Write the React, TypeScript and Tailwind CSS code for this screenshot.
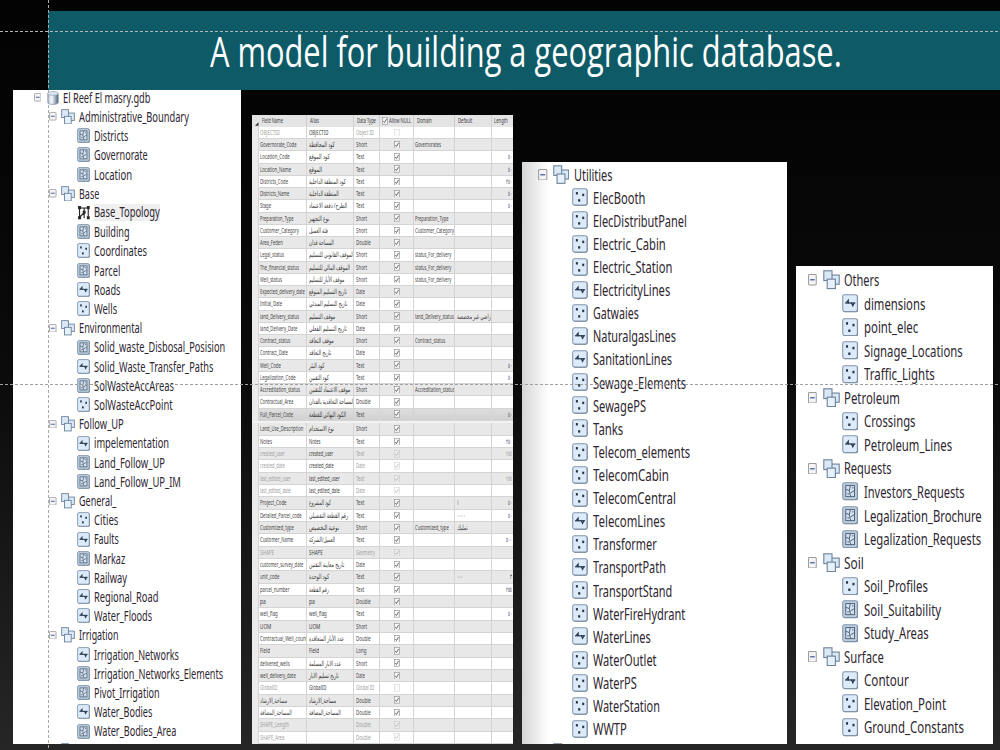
import { useLayoutEffect, useRef, useState } from 'react'
import clsx from 'clsx'

type Kind = 'db' | 'set' | 'poly' | 'line' | 'point' | 'topo'
type Node = [kind: Kind, label: string, width: number]
type Size = 'sm' | 'md' | 'lg'

// Condenses a label horizontally so that it takes exactly `width` pixels
function FitText({ text, width, className }: { text: string; width: number; className?: string }) {
  const ref = useRef<HTMLSpanElement>(null)
  const [scale, setScale] = useState(1)

  useLayoutEffect(() => {
    if (ref.current && ref.current.offsetWidth > 0) setScale(width / ref.current.offsetWidth)
  }, [text, width])

  return (
    <span className={clsx('block shrink-0 whitespace-nowrap', className)} style={{ width }}>
      <span ref={ref} dir="auto" className="inline-block origin-left" style={{ transform: `scaleX(${scale})` }}>
        {text}
      </span>
    </span>
  )
}

const mainTree: Node[] = [
  ['db', 'El Reef El masry.gdb', 87.5],
  ['set', 'Administrative_Boundary', 110],
  ['poly', 'Districts', 34.5],
  ['poly', 'Governorate', 54],
  ['poly', 'Location', 38],
  ['set', 'Base', 20],
  ['topo', 'Base_Topology', 65.5],
  ['poly', 'Building', 36],
  ['point', 'Coordinates', 53],
  ['poly', 'Parcel', 26.5],
  ['line', 'Roads', 26.5],
  ['point', 'Wells', 23],
  ['set', 'Environmental', 63.5],
  ['poly', 'Solid_waste_Disbosal_Posision', 131.5],
  ['line', 'Solid_Waste_Transfer_Paths', 119],
  ['poly', 'SolWasteAccAreas', 80],
  ['point', 'SolWasteAccPoint', 79],
  ['set', 'Follow_UP', 45],
  ['line', 'impelementation', 75],
  ['poly', 'Land_Follow_UP', 71],
  ['poly', 'Land_Follow_UP_IM', 87],
  ['set', 'General_', 37.5],
  ['point', 'Cities', 24],
  ['line', 'Faults', 25],
  ['poly', 'Markaz', 31.5],
  ['line', 'Railway', 33],
  ['line', 'Regional_Road', 64.5],
  ['line', 'Water_Floods', 58.5],
  ['set', 'Irrigation', 39.5],
  ['line', 'Irrigation_Networks', 85],
  ['poly', 'Irrigation_Networks_Elements', 129],
  ['poly', 'Pivot_Irrigation', 66],
  ['line', 'Water_Bodies', 58.5],
  ['poly', 'Water_Bodies_Area', 82.5],
  ['set', '', 0],
]

const utilitiesTree: Node[] = [
  ['set', 'Utilities', 38.7],
  ['point', 'ElecBooth', 52.5],
  ['point', 'ElecDistributPanel', 94],
  ['point', 'Electric_Cabin', 73],
  ['point', 'Electric_Station', 79],
  ['line', 'ElectricityLines', 77.5],
  ['point', 'Gatwaies', 46],
  ['line', 'NaturalgasLines', 83],
  ['line', 'SanitationLines', 79.5],
  ['point', 'Sewage_Elements', 93],
  ['point', 'SewagePS', 53],
  ['point', 'Tanks', 30],
  ['point', 'Telecom_elements', 97.5],
  ['point', 'TelecomCabin', 76],
  ['point', 'TelecomCentral', 83],
  ['line', 'TelecomLines', 72],
  ['point', 'Transformer', 63.5],
  ['line', 'TransportPath', 73],
  ['point', 'TransportStand', 79],
  ['point', 'WaterFireHydrant', 92],
  ['line', 'WaterLines', 57.5],
  ['point', 'WaterOutlet', 63.5],
  ['point', 'WaterPS', 43.5],
  ['point', 'WaterStation', 67],
  ['point', 'WWTP', 34],
  ['set', '', 0],
]

const othersTree: Node[] = [
  ['set', 'Others', 35.5],
  ['line', 'dimensions', 61.5],
  ['point', 'point_elec', 54],
  ['point', 'Signage_Locations', 99],
  ['point', 'Traffic_Lights', 71],
  ['set', 'Petroleum', 55.5],
  ['point', 'Crossings', 51.5],
  ['line', 'Petroleum_Lines', 88],
  ['set', 'Requests', 47.5],
  ['poly', 'Investors_Requests', 100.5],
  ['poly', 'Legalization_Brochure', 118],
  ['poly', 'Legalization_Requests', 117],
  ['set', 'Soil', 19.5],
  ['point', 'Soil_Profiles', 64],
  ['poly', 'Soil_Suitability', 77],
  ['poly', 'Study_Areas', 65],
  ['set', 'Surface', 40],
  ['line', 'Contour', 45],
  ['point', 'Elevation_Point', 82],
  ['point', 'Ground_Constants', 100],
]

const sizes = {
  sm: {
    row: 'h-[19.21px] text-[13.5px]',
    db: 'pl-[21px]',
    set: 'pl-[36.8px]',
    leaf: 'pl-[64.8px]',
    expander: 'h-[8.5px] w-[7.5px]',
    dbIcon: 'ml-[6px] h-[14px] w-[12px]',
    setIcon: 'ml-[4.3px] h-[15.5px] w-[14px]',
    icon: 'h-[15.3px] w-[13.3px]',
    setText: 'ml-[4px]',
    leafText: 'ml-[3.6px]',
  },
  md: {
    row: 'h-[23.12px] text-[15.5px]',
    db: '',
    set: 'pl-[16px]',
    leaf: 'pl-[49.7px]',
    expander: 'h-[11.5px] w-[9.4px]',
    dbIcon: '',
    setIcon: 'ml-[5.3px] h-[19px] w-[16.4px]',
    icon: 'h-[18.3px] w-[16.3px]',
    setText: 'ml-[4.8px]',
    leafText: 'ml-[4.8px]',
  },
  lg: {
    row: 'h-[23.55px] text-[15.8px]',
    db: '',
    set: 'pl-[11.5px]',
    leaf: 'pl-[45.8px]',
    expander: 'h-[11.5px] w-[8.8px]',
    dbIcon: '',
    setIcon: 'ml-[6.2px] h-[19.3px] w-[17px]',
    icon: 'h-[18.8px] w-[16.7px]',
    setText: 'ml-[4.5px]',
    leafText: 'ml-[4.8px]',
  },
}

function Expander({ className }: { className: string }) {
  return (
    <svg viewBox="0 0 10 12" preserveAspectRatio="none" className={clsx('shrink-0', className)}>
      <rect x="0.6" y="0.6" width="8.8" height="10.8" rx="1" fill="#f4f4f4" stroke="#9a9a9a" strokeWidth="1.1" />
      <path d="M2.4 6H7.6" stroke="#4d64a8" strokeWidth="1.4" />
    </svg>
  )
}

function NodeIcon({ kind, className }: { kind: Kind; className: string }) {
  const cls = clsx('shrink-0', className)

  if (kind === 'db') {
    return (
      <svg viewBox="0 0 12 14" preserveAspectRatio="none" className={cls}>
        <defs>
          <linearGradient id="cyl">
            <stop offset="0" stopColor="#b9c9dc" />
            <stop offset="0.4" stopColor="#f3f8fc" />
            <stop offset="1" stopColor="#4d6480" />
          </linearGradient>
        </defs>
        <path d="M0.8 2.3V11.6C0.8 14 11.2 14 11.2 11.6V2.3Z" fill="url(#cyl)" stroke="#61758d" strokeWidth="0.6" />
        <ellipse cx="6" cy="2.4" rx="5.2" ry="1.9" fill="#dfe9f3" stroke="#8195ab" strokeWidth="0.6" />
      </svg>
    )
  }

  if (kind === 'set') {
    return (
      <svg viewBox="0 0 17 19" preserveAspectRatio="none" className={cls}>
        <g fill="#dbe9f7" stroke="#6c829b" strokeWidth="1.1">
          <rect x="8" y="5" width="8.2" height="9" />
          <rect x="0.8" y="0.8" width="8.2" height="9.6" />
          <rect x="4.2" y="9" width="8.2" height="9.3" fill="#e6f1fb" />
        </g>
      </svg>
    )
  }

  if (kind === 'topo') {
    return (
      <svg viewBox="0 0 13 15" preserveAspectRatio="none" className={cls}>
        <g fill="none" stroke="#2b2424" strokeWidth="1.1">
          <path d="M2.5 2V13M2.5 3H11M11 2V13M2.5 12L7 7.5V3M7 7V13" />
        </g>
        <g fill="#2b2424">
          <rect x="1" y="1" width="3" height="3" />
          <rect x="1" y="11" width="3" height="3" />
          <rect x="9.6" y="1" width="2.8" height="3" />
          <rect x="9.6" y="11" width="2.8" height="3" />
          <rect x="5.6" y="5.6" width="2.8" height="3" />
        </g>
      </svg>
    )
  }

  return (
    <svg viewBox="0 0 16 18" preserveAspectRatio="none" className={cls}>
      <rect x="1" y="1" width="14.4" height="16.4" rx="1.8" fill="#5f7489" />
      <rect x="0.7" y="0.7" width="14" height="16" rx="1.8" fill={kind === 'poly' ? '#bccddf' : '#dceafa'} stroke="#8195aa" strokeWidth="1" />
      {kind === 'point' && (
        <g fill="#27384d">
          <rect x="3.8" y="4" width="2" height="2.4" />
          <rect x="10" y="5.6" width="2" height="2.4" />
          <rect x="6" y="11" width="2.1" height="2.4" />
        </g>
      )}
      {kind === 'line' && (
        <g fill="none" stroke="#27384d">
          <path d="M3 8.6H12.8" strokeWidth="1.2" />
          <path d="M4.2 8.2L6 6V9M9 8.4L10.4 11.2L11.6 8.6" strokeWidth="1.2" />
        </g>
      )}
      {kind === 'poly' && (
        <g fill="none" stroke="#4c5f76" strokeWidth="0.9">
          <rect x="3.6" y="3.4" width="8.4" height="10.6" fill="#d5e1ee" />
          <path d="M3.6 7L7 8.2L8 3.6M7 8.2L8.2 14M8.2 10.4L12 8.2M5 11.4H7M9.6 5.6H11" />
        </g>
      )}
    </svg>
  )
}

function Tree({ nodes, size }: { nodes: Node[]; size: Size }) {
  const s = sizes[size]
  return (
    <ul className="font-['Noto_Sans',sans-serif] text-[#2e2630]">
      {nodes.map(([kind, label, width], i) => {
        const isBranch = kind === 'db' || kind === 'set'
        return (
          <li
            key={i}
            className={clsx('flex items-center leading-none', s.row, kind === 'db' ? s.db : kind === 'set' ? s.set : s.leaf)}
          >
            {isBranch && <Expander className={clsx(s.expander, !label && 'invisible')} />}
            <NodeIcon kind={kind} className={kind === 'db' ? s.dbIcon : kind === 'set' ? s.setIcon : s.icon} />
            {label && (
              <FitText
                text={label}
                width={width}
                className={clsx('pt-[2px]', isBranch ? s.setText : s.leafText, kind === 'topo' && 'bg-[#efefef] pb-[2px]')}
              />
            )}
          </li>
        )
      })}
    </ul>
  )
}

interface Field {
  name: string
  nw: number
  alias?: string
  aw?: number
  type: string
  domain?: string
  dw?: number
  def?: string
  defW?: number
  len?: string
  muted?: boolean
  unchecked?: boolean
}

const upperFields: Field[] = [
  { name: 'OBJECTID', nw: 19.5, alias: 'OBJECTID', aw: 19, type: 'Object ID', muted: true, unchecked: true },
  { name: 'Governorate_Code', nw: 36.5, alias: 'كود المحافظة', aw: 26, type: 'Short', domain: 'Governorates', dw: 26 },
  { name: 'Location_Code', nw: 29.5, alias: 'كود الموقع', aw: 21, type: 'Text', len: '٥٠' },
  { name: 'Location_Name', nw: 31, alias: 'الموقع', aw: 13, type: 'Text', len: '٥٠' },
  { name: 'Districts_Code', nw: 28, alias: 'كود المنطقة الداخلية', aw: 37, type: 'Text', len: '٢٥٠' },
  { name: 'Districts_Name', nw: 29.5, alias: 'المنطقة الداخلية', aw: 30, type: 'Text', len: '٥٠' },
  { name: 'Stage', nw: 11, alias: 'الطرح/ دفعة الاعتماد', aw: 38, type: 'Text', len: '٥٠' },
  { name: 'Preparation_Type', nw: 33.5, alias: 'نوع التجهيز', aw: 20, type: 'Short', domain: 'Preparation_Type', dw: 33.5 },
  { name: 'Customer_Category', nw: 39, alias: 'فئة العميل', aw: 19, type: 'Short', domain: 'Customer_Category', dw: 39 },
  { name: 'Area_Feden', nw: 22.5, alias: 'المساحة فدان', aw: 25, type: 'Double' },
  { name: 'Legal_status', nw: 24, alias: 'الموقف القانوني للتسليم', aw: 45, type: 'Short', domain: 'status_For_delivery', dw: 36.5 },
  { name: 'The_financial_status', nw: 39, alias: 'الموقف المالي للتسليم', aw: 41, type: 'Short', domain: 'status_For_delivery', dw: 36.5 },
  { name: 'Well_status', nw: 22, alias: 'موقف الأبار للتسليم', aw: 35, type: 'Short', domain: 'status_For_delivery', dw: 36.5 },
  { name: 'Expected_delivery_date', nw: 45, alias: 'تاريخ التسليم المتوقع', aw: 38, type: 'Date' },
  { name: 'Initial_Date', nw: 22, alias: 'تاريخ التسليم المبدئي', aw: 38, type: 'Date' },
  { name: 'land_Delivery_status', nw: 39, alias: 'موقف التسليم', aw: 26, type: 'Short', domain: 'land_Delivery_status', dw: 39, def: 'أراضي غير مخصصة', defW: 35 },
  { name: 'land_Delivery_Date', nw: 37, alias: 'تاريخ التسليم الفعلي', aw: 38, type: 'Date' },
  { name: 'Contract_status', nw: 30.5, alias: 'موقف التعاقد', aw: 25, type: 'Short', domain: 'Contract_status', dw: 30.5 },
  { name: 'Contract_Date', nw: 28, alias: 'تاريخ التعاقد', aw: 22, type: 'Date' },
  { name: 'Well_Code', nw: 21, alias: 'كود البئر', aw: 15.5, type: 'Text', len: '٥٠' },
  { name: 'Legalization_Code', nw: 35.5, alias: 'كود التقنين', aw: 20, type: 'Text', len: '٥٠' },
  { name: 'Accreditation_status', nw: 40, alias: 'موقف الاعتماد للتقنين', aw: 41, type: 'Short', domain: 'Accreditation_status', dw: 39.5 },
  { name: 'Contractual_Area', nw: 33.5, alias: 'المساحة التعاقدية بالفدان', aw: 45, type: 'Double' },
  { name: 'Full_Parcel_Code', nw: 33, alias: 'الكود النهائي للقطعة', aw: 37, type: 'Text', len: '٥٠' },
]

const lowerFields: Field[] = [
  { name: 'Land_Use_Description', nw: 43, alias: 'نوع الاستخدام', aw: 25, type: 'Short' },
  { name: 'Notes', nw: 12, alias: 'Notes', aw: 11.5, type: 'Text', len: '٢٥٠' },
  { name: 'created_user', nw: 25, alias: 'created_user', aw: 24.5, type: 'Text', len: '٢٥٥', muted: true },
  { name: 'created_date', nw: 25, alias: 'created_date', aw: 25, type: 'Date', muted: true },
  { name: 'last_edited_user', nw: 31, alias: 'last_edited_user', aw: 31, type: 'Text', len: '٢٥٥', muted: true },
  { name: 'last_edited_date', nw: 31, alias: 'last_edited_date', aw: 31, type: 'Date', muted: true },
  { name: 'Project_Code', nw: 26.5, alias: 'كود المشروع', aw: 22, type: 'Text', def: '١', defW: 2, len: '٥٠' },
  { name: 'Detailed_Parcel_code', nw: 41.5, alias: 'رقم القطعة التفصيلي', aw: 39, type: 'Text', def: '٠٠٠٠', defW: 8, len: '٥٠' },
  { name: 'Customized_type', nw: 34, alias: 'نوعية التخصيص', aw: 30, type: 'Short', domain: 'Customized_type', dw: 34, def: 'تمليك', defW: 11 },
  { name: 'Customer_Name', nw: 33.5, alias: 'العميل/الشركة', aw: 26, type: 'Text', len: '٥٠٠' },
  { name: 'SHAPE', nw: 14, alias: 'SHAPE', aw: 13.5, type: 'Geometry', muted: true },
  { name: 'customer_survey_date', nw: 43.5, alias: 'تاريخ معاينة التقنين', aw: 35, type: 'Date' },
  { name: 'unit_code', nw: 19.5, alias: 'كود الوحدة', aw: 20, type: 'Text', def: '٠٠٠', defW: 6, len: '٣' },
  { name: 'parcel_number', nw: 29.5, alias: 'رقم القطعة', aw: 20, type: 'Text', len: '٢٥٥' },
  { name: 'pa', nw: 5.5, alias: 'pa', aw: 5.5, type: 'Double' },
  { name: 'well_flag', nw: 17.5, alias: 'well_flag', aw: 17.5, type: 'Text', len: '٥٠' },
  { name: 'UOM', nw: 11, alias: 'UOM', aw: 11, type: 'Short' },
  { name: 'Contractual_Well_count', nw: 47, alias: 'عدد الأبار المتعاقدة', aw: 35, type: 'Double' },
  { name: 'Field', nw: 10, alias: 'Field', aw: 10, type: 'Long' },
  { name: 'delivered_wells', nw: 29.5, alias: 'عدد الابار المسلمة', aw: 32, type: 'Short' },
  { name: 'well_delivery_date', nw: 35.5, alias: 'تاريخ تسليم الابار', aw: 30, type: 'Date' },
  { name: 'GlobalID', nw: 17, alias: 'GlobalID', aw: 17, type: 'Global ID', muted: true, unchecked: true },
  { name: 'مساحة_الارشاد', nw: 27, alias: 'مساحة_الارشاد', aw: 27, type: 'Double' },
  { name: 'المساحة_المضافة', nw: 32, alias: 'المساحة_المضافة', aw: 32, type: 'Double' },
  { name: 'SHAPE_Length', nw: 29, type: 'Double', muted: true },
  { name: 'SHAPE_Area', nw: 24.5, type: 'Double', muted: true },
]

const typeWidths: Record<string, number> = {
  'Object ID': 18,
  Short: 11,
  Text: 8.5,
  Double: 14.5,
  Date: 9,
  Geometry: 19,
  Long: 10.5,
  'Global ID': 18,
}

const columns = 'grid grid-cols-[7.3px_48.5px_47px_25.2px_34.6px_41.2px_37px_20.2px]'
const cell = 'flex items-center overflow-hidden border-r border-b border-[#d4d4d4] pl-[1.2px]'

function CheckBox({ checked, muted }: { checked: boolean; muted?: boolean }) {
  return (
    <svg viewBox="0 0 6 8" preserveAspectRatio="none" className={clsx('h-[7.6px] w-[5.8px] shrink-0', muted && 'opacity-35')}>
      <rect x="0.4" y="0.4" width="5.2" height="7.2" fill="#f6f6f6" stroke="#888" strokeWidth="0.6" />
      {checked && <path d="M1.4 4.2L2.6 5.8L4.8 2" fill="none" stroke="#444" strokeWidth="0.8" />}
    </svg>
  )
}

function FieldRow({ field, shaded, height, dark }: { field: Field; shaded: boolean; height: string; dark?: boolean }) {
  return (
    <div
      className={clsx(
        columns,
        height,
        'leading-none',
        dark ? 'bg-linear-to-b from-[#dedede] to-[#cfcfcf]' : shaded ? 'bg-[#e8e8e8]' : 'bg-white',
        field.muted ? 'text-[#a0a0a0]' : 'text-[#474747]',
      )}
    >
      <div className="border-r border-[#d4d4d4] bg-[#ebebeb]" />
      <div className={cell}><FitText text={field.name} width={field.nw} /></div>
      <div className={clsx(cell, 'text-[#404040]')}>
        {field.alias && <FitText text={field.alias} width={field.aw ?? 20} />}
      </div>
      <div className={cell}><FitText text={field.type} width={typeWidths[field.type]} /></div>
      <div className={clsx(cell, 'justify-center')}>
        <CheckBox checked={!field.unchecked} muted={field.muted} />
      </div>
      <div className={cell}>{field.domain && <FitText text={field.domain} width={field.dw ?? 30} />}</div>
      <div className={cell}>{field.def && <FitText text={field.def} width={field.defW ?? 8} />}</div>
      <div className="flex items-center justify-end border-b border-[#d4d4d4] pr-[1px]">
        {field.len && <FitText text={field.len} width={field.len.length * 2} />}
      </div>
    </div>
  )
}

function FieldTable() {
  const head = 'flex items-center border-r border-[#cfcfcf] pl-[2.6px]'
  return (
    <div className="font-['Noto_Sans','DejaVu_Sans',sans-serif] text-[7.2px]">
      <div className={clsx(columns, 'h-[11.8px] bg-[#e4e4e4] leading-none text-[#3c3c3c]')}>
        <div className="flex items-end justify-end pb-[1px]">
          <svg viewBox="0 0 4 4" className="h-[4px] w-[3.5px]"><path d="M4 0V4H0Z" fill="#333" /></svg>
        </div>
        <div className={head}><FitText text="Field Name" width={21} /></div>
        <div className={head}><FitText text="Alias" width={9} /></div>
        <div className={head}><FitText text="Data Type" width={19} /></div>
        <div className={clsx(head, 'gap-[1px]')}><CheckBox checked /><FitText text="Allow NULL" width={22} /></div>
        <div className={head}><FitText text="Domain" width={15} /></div>
        <div className={head}><FitText text="Default" width={14.5} /></div>
        <div className="flex items-center pl-[2px]"><FitText text="Length" width={14} /></div>
      </div>
      {upperFields.map((f, i) => (
        <FieldRow key={f.name} field={f} shaded={i % 2 === 1} height="h-[12.26px]" dark={i === upperFields.length - 1} />
      ))}
      <div className="flex h-[2.6px] items-end bg-[#f2f2f2]" />
      {lowerFields.map((f, i) => (
        <FieldRow key={f.name} field={f} shaded={i % 2 === 0} height="h-[12.34px]" />
      ))}
    </div>
  )
}

export default function App() {
  return (
    <div className="relative h-[750px] w-[1000px] overflow-hidden bg-linear-to-b from-[#030303] via-[#0b0b0b] to-[#262626] pt-[11px]">
      <header className="ml-[48px] flex h-[79px] items-center bg-[#0e5b67] pl-[162px] font-['Open_Sans',sans-serif] text-[42px] leading-none text-white">
        <FitText text="A model for building a geographic database." width={632} />
      </header>

      <main className="flex h-[654px] items-end pl-[12.5px]">
        <section className="-mt-px h-[654.3px] w-[228.5px] overflow-hidden bg-white">
          <div className="-mt-[1.8px]"><Tree nodes={mainTree} size="sm" /></div>
        </section>
        <section className="ml-[10.7px] h-[629px] w-[261px] overflow-hidden bg-white">
          <FieldTable />
        </section>
        <section className="ml-[9.6px] h-[582px] w-[264.4px] overflow-hidden bg-linear-to-r from-[#d6d6d6] via-white via-10% to-white pt-[0.8px]">
          <Tree nodes={utilitiesTree} size="md" />
        </section>
        <section className="ml-[9.8px] h-[478.5px] w-[196.2px] overflow-hidden bg-white pt-[2.7px]">
          <Tree nodes={othersTree} size="lg" />
        </section>
      </main>

      {/* slide guides */}
      <div className="absolute top-0 left-[48px] h-full w-px bg-[repeating-linear-gradient(180deg,#a9a9a9_0_3px,transparent_3px_5px)]" />
      <div className="absolute top-[31px] left-0 h-px w-full bg-[repeating-linear-gradient(90deg,#b5b5b5_0_3px,transparent_3px_5px)]" />
      <div className="absolute top-[384px] left-0 h-px w-full bg-[repeating-linear-gradient(90deg,#a0a0a0_0_3px,transparent_3px_5px)]" />
    </div>
  )
}
